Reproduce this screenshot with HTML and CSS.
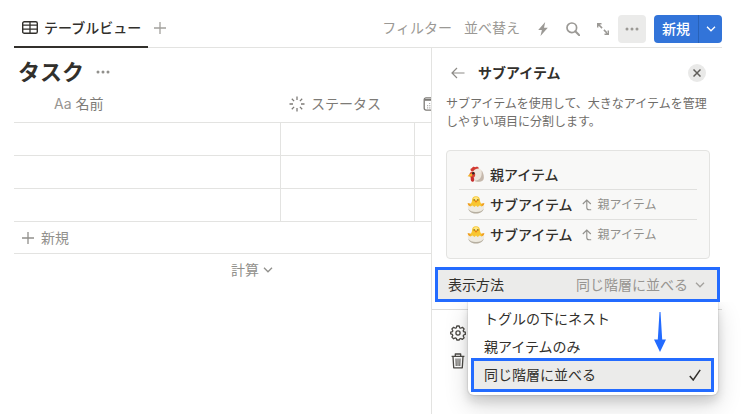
FILE: index.html
```html
<!DOCTYPE html>
<html lang="ja">

<head>
  <meta charset="UTF-8">
  <meta name="viewport" content="width=device-width, initial-scale=1.0">
  <title>タスク</title>
  <link rel="stylesheet" href="styles.css">
</head>

<body>
  <!-- shared symbols -->
  <svg class="symbols" width="0" height="0" aria-hidden="true">
    <symbol id="plus" viewBox="0 0 12 12">
      <path d="M6 0v12M0 6h12" fill="none" stroke="currentColor" stroke-width="1.3" />
    </symbol>
    <symbol id="dots" viewBox="0 0 14 4">
      <circle cx="2" cy="2" r="1.5" fill="currentColor" />
      <circle cx="7" cy="2" r="1.5" fill="currentColor" />
      <circle cx="12" cy="2" r="1.5" fill="currentColor" />
    </symbol>
    <symbol id="chevron" viewBox="0 0 10 6">
      <path d="M1 .8l4 4 4-4" fill="none" stroke="currentColor" stroke-width="1.3" />
    </symbol>
    <symbol id="up" viewBox="0 0 10 12">
      <path d="M.8 5l4-4 4 4M4.800 1v7.500q0 2.300 2.300 2.300h2.100" fill="none" stroke="currentColor" stroke-width="1.100" />
    </symbol>
    <symbol id="chick" viewBox="0 0 18 18">
      <path d="M.6 7Q3 7 5.500 8.500L4 11.500Q1 10.500.6 7zM17.400 7Q15 7 12.500 8.500l1.500 3Q17 10.500 17.400 7z" fill="#f0a020" />
      <path d="M9 .3c2.700 0 4.200 1.900 4 4.500 0 1.300 1.200 2.500 1.600 3.900V12H3.400V8.700C3.800 7.300 5 6.100 5 4.800 4.800 2.200 6.300.3 9 .3z" fill="#f8c62f" />
      <ellipse cx="9" cy="2.400" rx="2.600" ry="1.500" fill="#ffe680" />
      <circle cx="7.200" cy="3.900" r=".7" fill="#4a3a20" />
      <circle cx="10.800" cy="3.900" r=".7" fill="#4a3a20" />
      <path d="M7.500 4.700h3L9 6.800z" fill="#e87516" />
      <path d="M.8 9.300l2.600 1.300 2.200-1.200L7.500 11 9 9.500l1.700 1.500 1.900-1.600 2 1.200 2.600-1.300c.5 4.900-3.200 8.300-8.200 8.300S.3 14.200.8 9.300z" fill="#eeeae0" />
      <path d="M1.200 12.500c1.300 2.500 4 3.500 7.800 3.500s6.500-1 7.800-3.500c-.8 3.300-3.800 5.100-7.800 5.100s-7-1.800-7.800-5.100z" fill="#b5aea0" />
    </symbol>
  </svg>

  <div class="page">
    <header class="toolbar">
      <div class="tabs">
        <button class="tab active">
          <svg width="16" height="13" viewBox="0 0 16 13">
            <rect x=".7" y=".7" width="14.600" height="11.600" rx="1.600" fill="none" stroke="currentColor" stroke-width="1.400" />
            <path d="M1 4.200h14M1 8.200h14M8 1v11" stroke="currentColor" stroke-width="1.300" />
          </svg>
          テーブルビュー
        </button>
        <button class="tab-add" aria-label="ビューを追加"><svg width="12" height="12"><use href="#plus" /></svg></button>
      </div>
      <div class="actions">
        <button class="text-btn">フィルター</button>
        <button class="text-btn">並べ替え</button>
        <div class="icon-group">
          <button class="icon-btn" aria-label="オートメーション">
            <svg width="10" height="14" viewBox="0 0 10 14"><path d="M7.200 0L.2 8h3.700L2.500 14 9.800 5.800H6z" fill="currentColor" /></svg>
          </button>
          <button class="icon-btn" aria-label="検索">
            <svg width="14" height="14" viewBox="0 0 14 14"><circle cx="5.800" cy="5.800" r="4.800" fill="none" stroke="currentColor" stroke-width="1.700" /><path d="M9.300 9.300l4 4" stroke="currentColor" stroke-width="2" stroke-linecap="round" /></svg>
          </button>
          <button class="icon-btn" aria-label="拡大">
            <svg width="12" height="12" viewBox="0 0 12 12"><path d="M.7 4.500V.7h3.800M.9.900l4.200 4.200M11.300 7.500v3.800H7.500M11.100 11.100L6.900 6.900" fill="none" stroke="currentColor" stroke-width="1.500" /></svg>
          </button>
          <button class="icon-btn pressed" aria-label="その他"><svg width="14" height="4"><use href="#dots" /></svg></button>
        </div>
        <div class="new-group">
          <button class="new-btn">新規</button>
          <button class="new-more" aria-label="テンプレート"><svg width="10" height="6"><use href="#chevron" /></svg></button>
        </div>
      </div>
    </header>

    <div class="content">
      <main class="database">
        <div class="title-row">
          <h1>タスク</h1>
          <button class="title-more" aria-label="タイトルメニュー"><svg width="14" height="4"><use href="#dots" /></svg></button>
        </div>
        <table class="tasks">
          <colgroup>
            <col class="col-name">
            <col class="col-status">
            <col class="col-date">
          </colgroup>
          <thead>
            <tr>
              <th class="head-name"><div class="prop"><span>Aa</span>名前</div></th>
              <th>
                <div class="prop">
                  <svg width="16" height="16" viewBox="0 0 16 16"><path d="M8 .5v3.500M8 12v3.500M.5 8H4M12 8h3.500M2.800 2.800l2.300 2.300M10.900 10.900l2.300 2.300M2.800 13.200l2.300-2.300M10.900 5.100l2.300-2.300" stroke="currentColor" stroke-width="1.300" /></svg>
                  ステータス
                </div>
              </th>
              <th aria-label="日付">
                <div class="prop">
                  <svg width="14" height="14" viewBox="0 0 14 14"><rect x="1.200" y=".9" width="12" height="12.200" rx="1.800" fill="none" stroke="currentColor" stroke-width="1.300" /><path d="M1.500 2h11v1.800h-11z" fill="currentColor" /><path d="M6 6.500h5M4 8.700h7M4 10.900h4" stroke="currentColor" stroke-width="1.200" stroke-dasharray="1.200 1" opacity=".6" /></svg>
                </div>
              </th>
            </tr>
          </thead>
          <tbody>
            <tr><td></td><td></td><td></td></tr>
            <tr><td></td><td></td><td></td></tr>
            <tr><td></td><td></td><td></td></tr>
          </tbody>
        </table>
        <button class="add-row"><svg width="12" height="12"><use href="#plus" /></svg>新規</button>
        <div class="calc-row">
          <button class="calc">計算<svg width="10" height="6"><use href="#chevron" /></svg></button>
        </div>
      </main>

      <aside class="panel">
        <div class="panel-head">
          <button class="back" aria-label="戻る">
            <svg width="14" height="12" viewBox="0 0 14 12"><path d="M6 1L1 6l5 5M1 6h12.500" fill="none" stroke="currentColor" stroke-width="1.200" /></svg>
          </button>
          <h2>サブアイテム</h2>
          <button class="close" aria-label="閉じる">
            <svg width="8" height="8" viewBox="0 0 8 8"><path d="M.5.500l7 7M7.500.500l-7 7" stroke="currentColor" stroke-width="1.500" /></svg>
          </button>
        </div>
        <p class="desc">サブアイテムを使用して、大きなアイテムを管理しやすい項目に分割します。</p>

        <ul class="preview">
          <li>
            <svg width="18" height="18" viewBox="0 0 18 18">
              <path d="M5 4.500C6.500 2 10 1 12.500 2.500c2.500 1.600 4.300 5.500 4.300 9.200 0 2.600-2 4-5 4-2.300 0-4.300-.5-5.300-2z" fill="#ece5dc" />
              <path d="M14.500 4.300c1.500 2 2.300 4.600 2.300 7.400 0 2.600-2 4-5 4-1.800 0-3.300-.3-4.400-1 4.600.2 8.300-2.700 7.100-10.400z" fill="#c5b8ac" />
              <path d="M4.300 5.300C3 3.800 3.300 2 5 2.200 5.200.7 7.200.2 8.200 1.300 9.800.3 11.800 1 11.900 2.400 9.500 2.200 7.500 3.300 6.500 5z" fill="#d23a32" />
              <path d="M3.600 6.200C5.600 4.700 8 5.800 8.200 8.200c.2 2-.9 3.700-2.800 3.800-1.900 0-2.900-1.300-2.900-3 0-1.200.3-2.200 1.100-2.800z" fill="#d94236" />
              <path d="M.6 10.200Q2 7.600 5.200 7.500q.4 2.500-1.300 3.300z" fill="#f2b22a" />
              <path d="M4 11c1.700-.6 3.400.5 3.200 2.900-.2 2-2.200 2.600-3 1.200-.6-1.100-.7-3-.2-4.100z" fill="#c62d2d" />
              <circle cx="6.300" cy="7.200" r="1.200" fill="#2c2421" />
            </svg>
            <span class="item">親アイテム</span>
          </li>
          <li>
            <svg width="18" height="18"><use href="#chick" /></svg>
            <span class="item">サブアイテム</span>
            <span class="parent"><svg width="10" height="12"><use href="#up" /></svg>親アイテム</span>
          </li>
          <li>
            <svg width="18" height="18"><use href="#chick" /></svg>
            <span class="item">サブアイテム</span>
            <span class="parent"><svg width="10" height="12"><use href="#up" /></svg>親アイテム</span>
          </li>
        </ul>

        <div class="display-wrap">
          <div class="display">
            <label for="display">表示方法</label>
            <select id="display">
              <option>トグルの下にネスト</option>
              <option>親アイテムのみ</option>
              <option selected>同じ階層に並べる</option>
            </select>
            <svg width="10" height="6"><use href="#chevron" /></svg>
          </div>
          <div class="menu">
            <button class="option">トグルの下にネスト</button>
            <button class="option">親アイテムのみ</button>
            <button class="option selected">
              同じ階層に並べる
              <svg width="12" height="12" viewBox="0 0 12 12"><path d="M.8 7l3.400 4L11.200.9" fill="none" stroke="currentColor" stroke-width="1.500" /></svg>
            </button>
            <svg class="arrow" width="12" height="40" viewBox="0 0 12 40"><path d="M5.500 0h1l1.700 27.500H12L6 40 0 27.500h3.800z" fill="#236bff" /></svg>
          </div>
        </div>

        <div class="panel-foot">
          <button aria-label="設定">
            <svg width="16" height="16" viewBox="0 0 16 16">
              <path d="M6.800 1h2.400l.5 1.800 1 .4 1.700-.9 1.700 1.700-.9 1.700.4 1 1.700.5v2.200l-1.700.6-.4 1 .9 1.700-1.700 1.700-1.700-.9-1 .4L9.200 15H6.800l-.5-1.700-1-.4-1.700.9-1.700-1.700.9-1.700-.4-1L.7 8.800V7.200l1.700-.5.4-1-.9-1.700 1.700-1.700 1.700.9 1-.4z" fill="none" stroke="currentColor" stroke-width="1.300" stroke-linejoin="round" />
              <circle cx="8" cy="8" r="2.100" fill="none" stroke="currentColor" stroke-width="1.300" />
            </svg>
          </button>
          <button aria-label="削除">
            <svg width="14" height="16" viewBox="0 0 14 16">
              <path d="M.6 3.400h12.800M4.300 3.200V1h5.400v2.200M2 3.500l.7 11.300h8.600L12 3.500" fill="none" stroke="currentColor" stroke-width="1.300" stroke-linejoin="round" />
              <path d="M5 5.500l.2 7.500M7 5.500V13M9 5.500L8.800 13" stroke="currentColor" stroke-width="1" />
            </svg>
          </button>
        </div>
      </aside>
    </div>
  </div>
</body>

</html>
```

FILE: styles.css
```css
* {
  box-sizing: border-box;
}

html,
body {
  margin: 0;
  padding: 0;
  background: #fff;
  color: #32302c;
  font-family: "Inter", "Noto Sans CJK JP", sans-serif;
  font-size: 14px;
  line-height: 20px;
}

button,
select {
  margin: 0;
  padding: 0;
  border: none;
  background: none;
  color: inherit;
  font: inherit;
  cursor: pointer;
}

svg {
  display: block;
  flex-shrink: 0;
}

.symbols {
  position: absolute;
}

.page {
  display: flex;
  flex-direction: column;
  min-height: 100vh;
  padding: 8px 24px 0 14px;
}

/* toolbar */
.toolbar {
  display: flex;
  justify-content: space-between;
  height: 40px;
  border-bottom: 1px solid #e3e3e1;
}

.tabs {
  display: flex;
  align-items: stretch;
}

.tab {
  display: flex;
  align-items: center;
  gap: 6px;
  height: 40px;
  padding: 1px 7px 0 8px;
  border-bottom: 2px solid #32302c;
  font-weight: 500;
  white-space: nowrap;
}

.tab-add {
  padding: 0 6px;
  color: #a3a19d;
}

.actions {
  display: flex;
  align-items: center;
  gap: 8px;
  color: #9b9995;
}

.text-btn {
  margin-right: 4px;
  white-space: nowrap;
}

.text-btn + .text-btn {
  margin-right: 0;
}

.icon-group {
  display: flex;
}

.icon-btn {
  display: flex;
  align-items: center;
  justify-content: center;
  width: 30px;
  height: 28px;
}

.icon-btn.pressed {
  width: 28px;
  border-radius: 4px;
  background: #ebebea;
}

.new-group {
  display: flex;
  height: 28px;
  border-radius: 4px;
  background: #3274d9;
  color: #fff;
  overflow: hidden;
}

.new-btn {
  padding: 0 8px;
  font-weight: 500;
}

.new-more {
  width: 24px;
  padding: 0 7px;
  border-left: 1px solid #2862b8;
}

.icon-group,
.new-group {
  margin-top: 2px;
}

.content {
  display: flex;
  flex: 1;
}

/* database */
.database {
  flex: 1;
  min-width: 0;
  overflow: hidden;
}

.title-row {
  display: flex;
  align-items: center;
  gap: 12px;
  height: 40px;
  padding: 8px 4px 0;
}

h1 {
  margin: 0;
  font-size: 22px;
  line-height: 32px;
}

.title-more {
  color: #91908c;
}

.tasks {
  width: 600px;
  border-collapse: separate;
  border-spacing: 0;
  table-layout: fixed;
}

.col-name {
  width: 267px;
}

.col-status {
  width: 134px;
}

.tasks th {
  height: 35px;
  padding: 0 8px 2px;
  border-bottom: 1px solid #e3e3e1;
  color: #7d7b77;
  font-weight: 400;
}

.tasks .head-name {
  padding-left: 40px;
}

.prop {
  display: flex;
  align-items: center;
  gap: 6px;
}

.prop span {
  color: #979591;
}

.head-name .prop {
  gap: 4px;
}

.tasks td {
  height: 33px;
  padding: 0;
  border-right: 1px solid #e3e3e1;
  border-bottom: 1px solid #e3e3e1;
}

.add-row {
  display: flex;
  align-items: center;
  gap: 7px;
  width: 100%;
  height: 32px;
  padding: 0 8px;
  border-bottom: 1px solid #e3e3e1;
  color: #91908c;
}

.calc-row {
  display: flex;
  justify-content: flex-end;
  width: 266px;
  padding: 6px 7px 0;
  color: #91908c;
}

.calc {
  display: flex;
  align-items: center;
  gap: 4px;
}

/* side panel */
.panel {
  width: 291px;
  border-left: 1px solid #e3e3e1;
}

.panel-head {
  display: flex;
  align-items: center;
  padding: 15px 16px 0 19px;
}

.back {
  color: #8d8b87;
}

h2 {
  flex: 1;
  margin: 0 0 0 13px;
  font-size: 14px;
  line-height: 20px;
}

.close {
  display: flex;
  align-items: center;
  justify-content: center;
  width: 18px;
  height: 18px;
  border-radius: 50%;
  background: #e9e9e8;
  color: #5f5d59;
}

.desc {
  margin: 12px 12px 0 14px;
  color: #6f6d69;
  font-size: 12px;
  line-height: 18px;
}

.preview {
  margin: 19px 12px 8px 14px;
  padding: 9px 12px 8px;
  border: 1px solid #e3e3e1;
  border-radius: 4px;
  background: #f8f8f7;
  list-style: none;
}

.preview li {
  display: flex;
  align-items: center;
  height: 30px;
  padding-left: 8px;
  border-bottom: 1px solid #e0e0de;
}

.preview li:last-child {
  border-bottom: none;
}

.item {
  margin-left: 5px;
  font-weight: 500;
}

.parent {
  display: flex;
  align-items: center;
  gap: 6px;
  margin-left: 9px;
  color: #91908c;
  font-size: 12px;
}

.display-wrap {
  position: relative;
  padding: 0 2px 7px 3px;
  border-bottom: 1px solid #dcdcda;
}

.display {
  display: flex;
  align-items: center;
  gap: 7px;
  height: 35px;
  padding: 0 12px 0 10px;
  border: 3px solid #236bff;
  background: #ebebea;
}

.display label {
  flex: 1;
}

.display select {
  appearance: none;
  color: #979591;
  text-align-last: right;
}

.display svg {
  color: #a3a19d;
}

.menu {
  position: absolute;
  z-index: 1;
  top: 35px;
  right: 4px;
  left: 36px;
  padding: 3px 7px 6px 6px;
  border-radius: 0 0 6px 6px;
  background: #fff;
  box-shadow: 0 0 1px 1px rgba(15, 15, 15, .08), 0 6px 10px rgba(15, 15, 15, .12), 0 10px 24px rgba(15, 15, 15, .16);
  clip-path: inset(0 -40px -50px -40px);
}

.option {
  display: flex;
  align-items: center;
  justify-content: space-between;
  width: 100%;
  height: 28px;
  padding: 0 10px;
}

.option.selected {
  outline: 3px solid #236bff;
  background: #ebebea;
}

.arrow {
  position: absolute;
  top: 10px;
  right: 52px;
}

.panel-foot {
  display: flex;
  flex-direction: column;
  padding: 9px 18px;
}

.panel-foot button {
  display: flex;
  align-items: center;
  justify-content: center;
  width: 16px;
  height: 28px;
  color: #4b4945;
}
```
